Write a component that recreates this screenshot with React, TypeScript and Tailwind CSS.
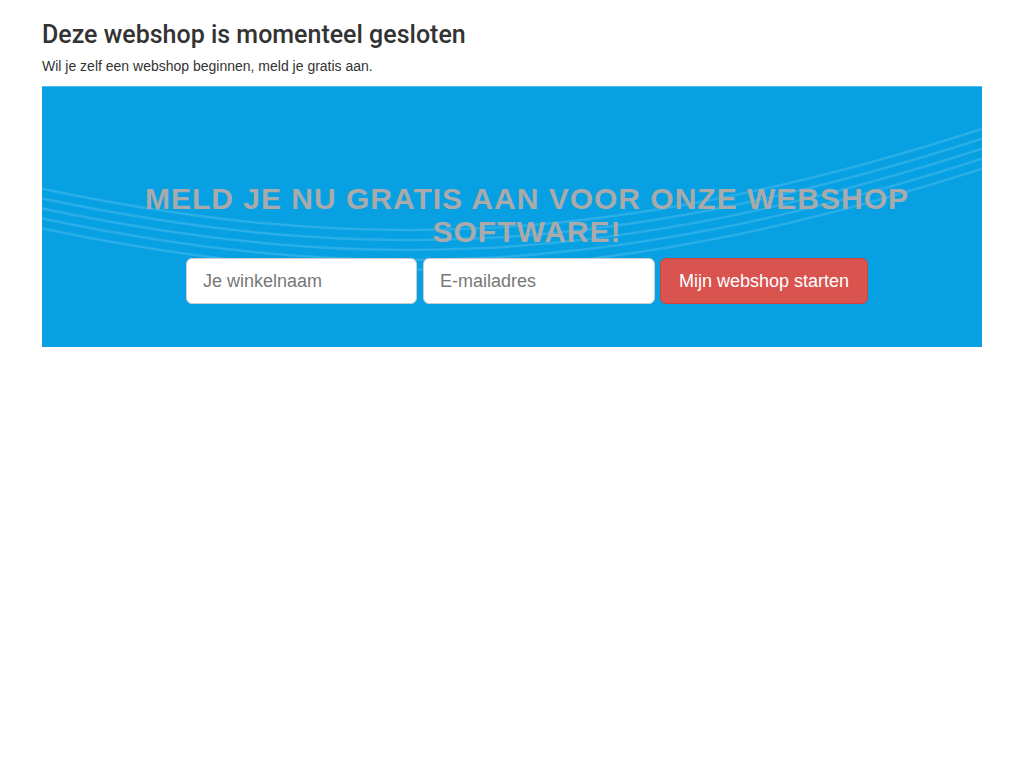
export default function App() {
  return (
    <div className="min-h-screen bg-white font-['Liberation_Sans',Arial,sans-serif] text-[#333] text-[14px] leading-[20px]">
      <div className="w-[970px] mx-auto px-[15px]">
        {/* intro */}
        <h3 className="mt-[22px] mb-[8px] font-['Roboto',Arial,sans-serif] text-[25px] leading-[26.4px] font-medium">Deze webshop is momenteel gesloten</h3>
        <p className="mb-[10px]">Wil je zelf een webshop beginnen, meld je gratis aan.</p>

        {/* signup banner */}
        <div className="relative overflow-hidden bg-[#07a1e3] border-t border-[#4dbcee] pt-[95px] pb-[43px] pl-[30px]">
          <svg className="absolute inset-0 w-full h-full pointer-events-none" viewBox="0 0 940 261" preserveAspectRatio="none" fill="none">
            {[0, 10, 20, 30, 40].map(o => (
              <path
                key={o}
                d={`M0 ${102 + o} C 300 ${165 + o}, 560 ${165 + o}, 940 ${42 + o}`}
                stroke="#ffffff"
                strokeOpacity="0.14"
                strokeWidth="2.5"
              />
            ))}
          </svg>

          <div className="relative flex flex-col items-center">
            <h2 className="text-center uppercase font-bold text-[30px] leading-[33px] tracking-[1px] text-[#aaaaaa] max-w-[830px]">
              Meld je nu gratis aan voor onze webshop software!
            </h2>
            <form className="mt-[10px] flex items-center" onSubmit={e => e.preventDefault()}>
              <input
                type="text"
                placeholder="Je winkelnaam"
                className="w-[231px] h-[46px] px-[16px] text-[18px] bg-white border border-[#ccc] rounded-[6px] placeholder:text-[#777] outline-none"
              />
              <input
                type="email"
                placeholder="E-mailadres"
                className="ml-[6px] w-[232px] h-[46px] px-[16px] text-[18px] bg-white border border-[#ccc] rounded-[6px] placeholder:text-[#777] outline-none"
              />
              <button
                type="submit"
                className="ml-[5px] h-[46px] px-[18px] text-[18px] text-white bg-[#d9534f] border border-[#d43f3a] rounded-[6px]"
              >
                Mijn webshop starten
              </button>
            </form>
          </div>
        </div>
      </div>
    </div>
  );
}
